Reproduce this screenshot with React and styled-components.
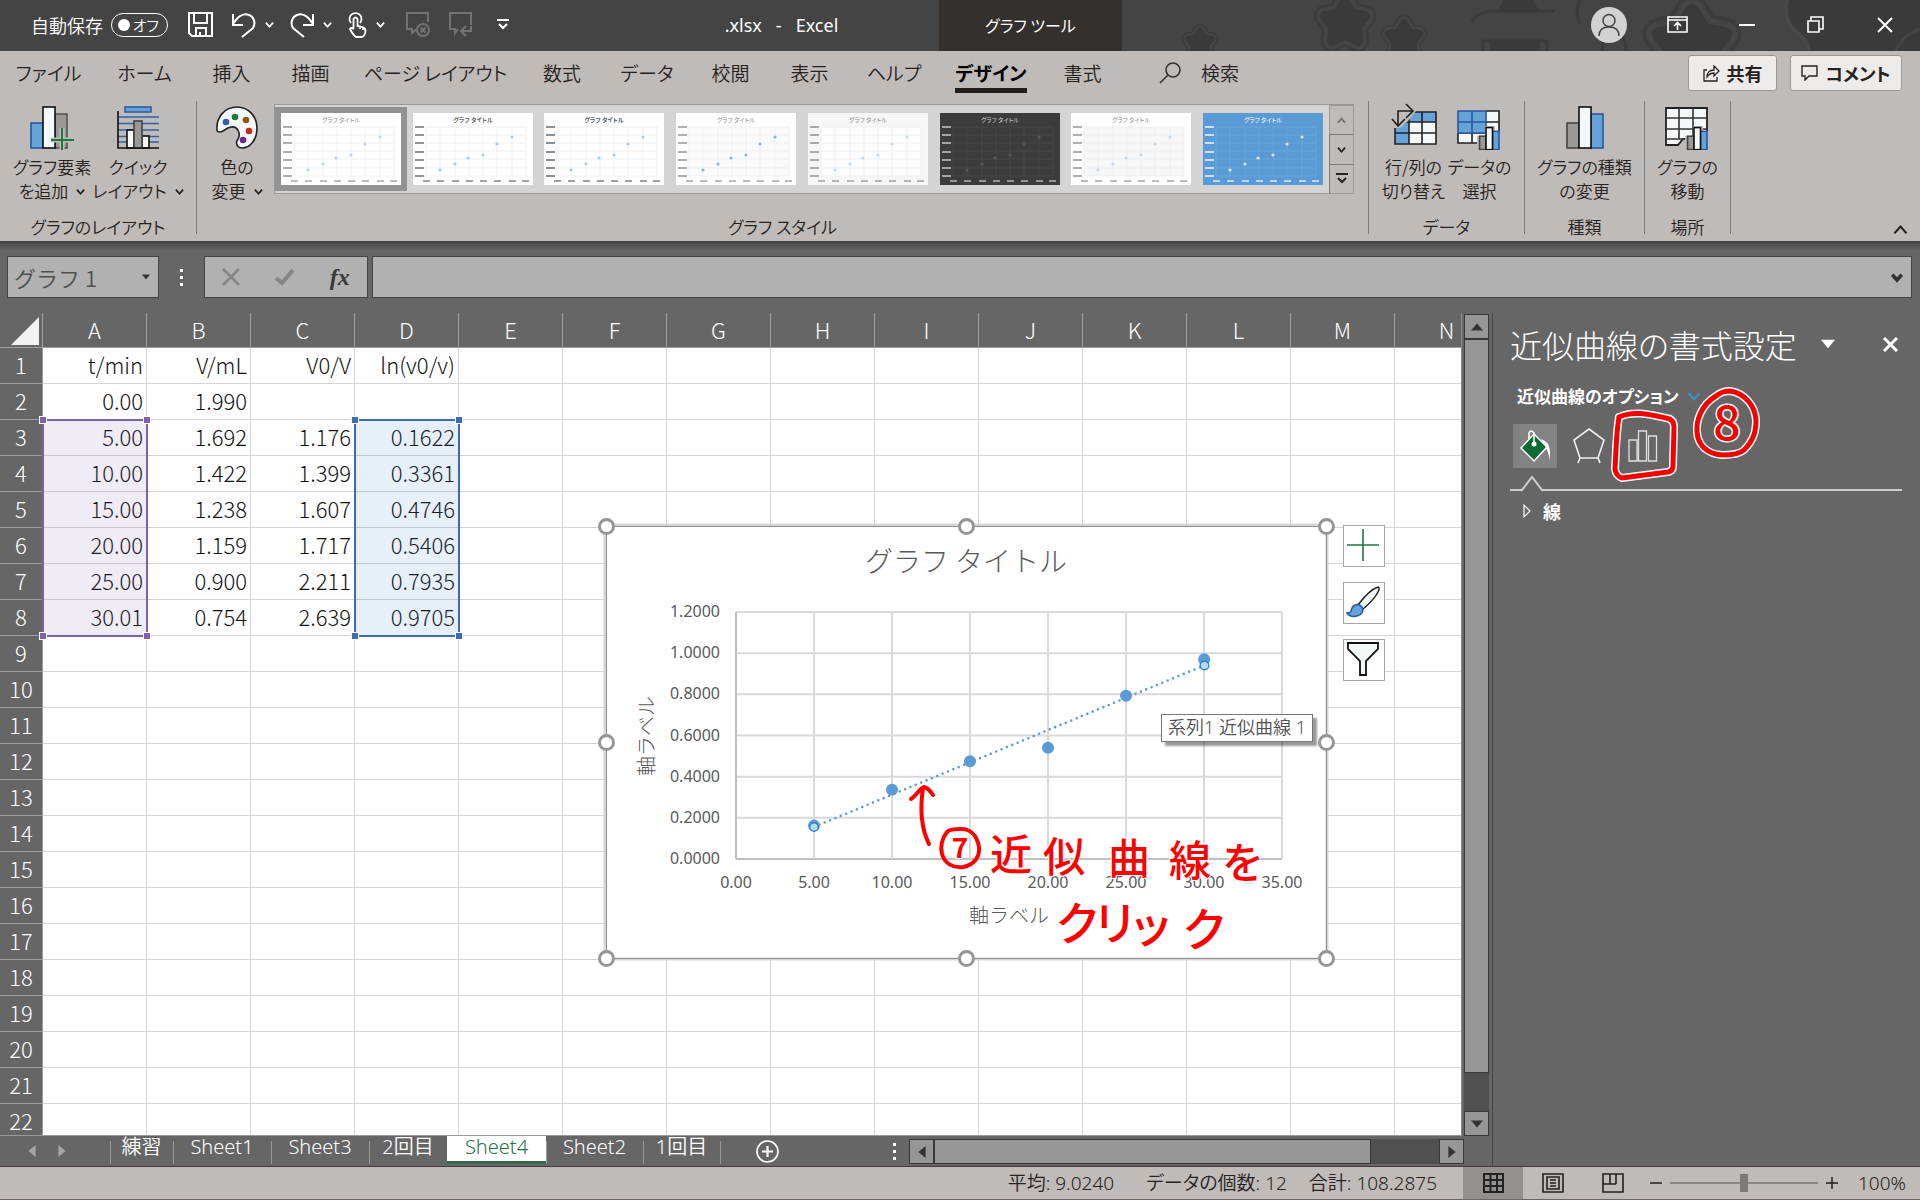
import React, {useState} from 'react'
import styled, {createGlobalStyle, css} from 'styled-components'

const GlobalStyle = createGlobalStyle`
    * {
        box-sizing: border-box;
    }
    body {
        margin: 0;
        background: #666666;
        font-family: "Noto Sans CJK JP", "Noto Sans", sans-serif;
        font-size: 18px;
        font-weight: 350;
        line-height: 24px;
        color: #262220;
        overflow: hidden;
    }
    button, input {
        font: inherit;
        color: inherit;
        margin: 0;
        padding: 0;
        border: 0;
        background: none;
    }
    svg {
        display: block;
        flex: none;
    }
`

const Window = styled.div`
    height: 100vh;
    display: flex;
    flex-direction: column;
    font-feature-settings: "palt";
`

/* ---------- title bar ---------- */

const TitleBar = styled.header`
    height: 51px;
    flex: none;
    display: flex;
    background: #444444;
    color: #ffffff;
`

const QuickAccess = styled.div`
    width: 624px;
    padding: 0 0 2px 31px;
    display: flex;
    align-items: center;
`

const AutoSave = styled.label`
    display: flex;
    align-items: center;
    gap: 8px;
    margin-right: 20px;
    white-space: nowrap;
`

const Switch = styled.span`
    width: 57px;
    height: 24px;
    padding: 0 8px 0 6px;
    border: 1px solid #ffffff;
    border-radius: 12px;
    display: flex;
    align-items: center;
    justify-content: space-between;
    font-size: 15px;
    input {
        appearance: none;
        width: 12px;
        height: 12px;
        border-radius: 50%;
        background: #ffffff;
    }
`

const QuickButton = styled.button`
    width: ${p => p.$w || 58}px;
    height: 40px;
    display: flex;
    align-items: center;
    gap: 9px;
    opacity: ${p => p.disabled ? 0.25 : 1};
`

const DocTitle = styled.div`
    width: 315px;
    padding-bottom: 2px;
    display: flex;
    align-items: center;
    justify-content: center;
    white-space: pre;
    font-family: "Noto Sans", sans-serif;
    font-size: 18px;
    font-weight: 400;
`

const ToolTab = styled.div`
    width: 183px;
    padding-bottom: 2px;
    display: flex;
    align-items: center;
    justify-content: center;
    background: #33302e;
    font-size: 16px;
    font-weight: 400;
`

const WindowControls = styled.div`
    flex: 1;
    position: relative;
    display: flex;
    justify-content: flex-end;
    overflow: hidden;
    padding: 0 1px 2px 0;
`

const Pattern = styled.svg`
    position: absolute;
    right: 0;
    top: 0;
`

const WinButton = styled.button`
    position: relative;
    width: 69px;
    display: flex;
    align-items: center;
    justify-content: center;
`

/* ---------- ribbon ---------- */

const RibbonTabs = styled.nav`
    height: 50px;
    flex: none;
    display: flex;
    padding: 4px 18px 10px 0;
    background: #bfbbb8;
    font-size: 19px;
`

const Tab = styled.button`
    width: ${p => p.$w}px;
    height: 40px;
    padding-top: 6px;
    display: flex;
    justify-content: center;
    white-space: nowrap;
    ${p => p.$active && css`
        font-weight: 700;
        color: #000000;
    `}
    span {
        height: 32px;
        border-bottom: ${p => p.$active ? '5px solid #231f1e' : '0'};
    }
`

const SearchBox = styled.button`
    display: flex;
    align-items: center;
    gap: 20px;
    margin-left: 37px;
`

const TabActions = styled.div`
    margin-left: auto;
    display: flex;
    gap: 13px;
`

const ActionButton = styled.button`
    height: 36px;
    width: ${p => p.$w}px;
    display: flex;
    align-items: center;
    justify-content: center;
    gap: 7px;
    border: 1px solid #9b9896;
    border-radius: 3px;
    background: #edebe9;
    font-size: 18px;
    font-weight: 700;
`

const Ribbon = styled.section`
    height: 140px;
    flex: none;
    display: flex;
    background: #bfbbb8;
`

const Group = styled.div`
    width: ${p => p.$w ? p.$w + 'px' : 'auto'};
    flex: ${p => p.$w ? 'none' : '1'};
    min-width: 0;
    height: 133px;
    display: flex;
    flex-direction: column;
    align-items: center;
    justify-content: space-between;
    border-right: 1px solid #7d7a78;
`

const GroupItems = styled.div`
    width: 100%;
    display: flex;
    justify-content: ${p => p.$start ? 'flex-start' : 'center'};
    padding-left: ${p => p.$start ? 8 : 0}px;
`

const GroupName = styled.div`
    height: 19px;
    font-size: 17px;
`

const BigButton = styled.button`
    width: ${p => p.$w}px;
    padding-top: 5px;
    flex: none;
    display: flex;
    flex-direction: column;
    align-items: center;
    gap: 5px;
    font-size: 17px;
    line-height: 24px;
    white-space: nowrap;
    span {
        display: flex;
        align-items: center;
        justify-content: center;
        gap: 8px;
    }
`

const Gallery = styled.div`
    flex: 1;
    min-width: 0;
    height: 90px;
    margin: 3px 14px 0 5px;
    display: flex;
    border: 1px solid #999999;
    background: #d4d4d4;
    overflow: hidden;
`

const Thumb = styled.button`
    width: 132px;
    height: 84px;
    margin-top: 2px;
    display: flex;
    align-items: center;
    justify-content: center;
    background: ${p => p.$selected ? '#929292' : 'none'};
`

const GalleryArrows = styled.div`
    width: 24px;
    flex: none;
    margin-left: auto;
    display: flex;
    flex-direction: column;
    background: #bfbbb8;
`

const GalleryArrow = styled.button`
    flex: 1;
    display: flex;
    align-items: center;
    justify-content: center;
    border-left: 1px solid #7d7a78;
    border-top: 1px solid #7d7a78;
    opacity: ${p => p.disabled ? 0.5 : 1};
`

const RibbonEnd = styled.div`
    width: 189px;
    display: flex;
    align-items: flex-end;
    justify-content: flex-end;
    padding: 0 12px 4px 0;
`

/* ---------- formula bar ---------- */

const FormulaBar = styled.div`
    height: 72px;
    flex: none;
    display: flex;
    padding: 15px 8px 15px 7px;
    background: linear-gradient(#3f4040, #666666 9px);
`

const FieldBox = styled.div`
    width: ${p => p.$w ? p.$w + 'px' : 'auto'};
    flex: ${p => p.$w ? 'none' : '1'};
    display: flex;
    align-items: center;
    justify-content: space-around;
    border: 1px solid #444444;
    background: #b1b1b1;
    color: #505050;
    & + & {
        margin-left: 4px;
    }
    input {
        flex: 1;
        min-width: 0;
        padding-left: 6px;
        font-size: 22px;
        line-height: 30px;
        font-feature-settings: normal;
    }
    button {
        padding: 0 8px;
    }
`

const FxButton = styled.button`
    font-family: "Liberation Serif", serif;
    font-size: 24px;
    font-style: italic;
    font-weight: 700;
    color: #3a3a3a;
`

const Dots = styled.div`
    width: ${p => p.$w || 45}px;
    display: flex;
    flex-direction: column;
    align-items: center;
    justify-content: center;
    gap: 4px;
    &::before, &::after, i {
        content: "";
        width: 3px;
        height: 3px;
        background: #ffffff;
    }
`

/* ---------- sheet ---------- */

const Main = styled.main`
    flex: 1;
    min-height: 0;
    display: flex;
`

const Workbook = styled.div`
    flex: 1;
    min-width: 0;
    display: flex;
    flex-direction: column;
    border-right: 1px solid #444444;
`

const SheetRow = styled.div`
    flex: 1;
    min-height: 0;
    display: flex;
`

const SheetPane = styled.div`
    flex: 1;
    position: relative;
    min-width: 0;
    overflow: hidden;
    border-right: 1px solid #8c8c8c;
    border-bottom: 1px solid #999999;
`

const Table = styled.table`
    width: 1499px;
    table-layout: fixed;
    border-collapse: separate;
    border-spacing: 0;
    font-size: 22px;
    line-height: 32px;
    color: #111111;
    th {
        height: 36px;
        padding: 0 0 3px;
        font-size: 22px;
        font-weight: 300;
        color: #ffffff;
        background: #666666;
        border-right: 1px solid #9d9d9d;
        border-bottom: 1px solid #9d9d9d;
    }
    thead th {
        height: 35px;
        padding-bottom: 2px;
    }
    td {
        height: 36px;
        padding: 0 3px 3px 0;
        text-align: right;
        font-weight: 300;
        background: #ffffff;
        border-right: 1px solid #d4d4d4;
        border-bottom: 1px solid #d4d4d4;
    }
    svg {
        margin: 4px 0 0 10px;
    }
`

/* coloured frame over the cells that feed a chart series */
const RangeFrame = styled.div`
    position: absolute;
    left: ${p => p.$left}px;
    top: 106px;
    width: 106px;
    height: 218px;
    border: 2px solid ${p => p.$color};
    background: ${p => p.$fill};
    span {
        position: absolute;
        width: 6px;
        height: 6px;
        background: ${p => p.$color};
        outline: 1px solid #ffffff;
    }
    span:nth-child(1) { left: -4px; top: -4px; }
    span:nth-child(2) { right: -4px; top: -4px; }
    span:nth-child(3) { left: -4px; bottom: -4px; }
    span:nth-child(4) { right: -4px; bottom: -4px; }
`

const ChartObject = styled.div`
    position: absolute;
    left: 606px;
    top: 213px;
    font-feature-settings: normal;
    svg {
        overflow: visible;
    }
`

const ChartButtons = styled.div`
    position: absolute;
    left: 1343px;
    top: 212px;
    display: flex;
    flex-direction: column;
    gap: 15px;
    button {
        width: 42px;
        height: 42px;
        padding: 0 2px 2px 0;
        display: flex;
        align-items: center;
        justify-content: center;
        border: 1px solid #a6a6a6;
        background: #ffffff;
    }
`

const Tooltip = styled.div`
    position: absolute;
    left: 1161px;
    top: 401px;
    height: 28px;
    padding: 0 6px;
    border: 1px solid #767676;
    background: #ffffff;
    box-shadow: 4px 4px 2px rgba(0, 0, 0, 0.4);
    color: #505050;
    font-family: "Noto Sans", "Noto Sans CJK JP", sans-serif;
    line-height: 25px;
    font-size: 18px;
    font-feature-settings: normal;
    white-space: nowrap;
`

const ScrollBar = styled.div`
    display: flex;
    flex-direction: ${p => p.$vertical ? 'column' : 'row'};
    background: #505050;
    ${p => p.$vertical ? css`
        width: 25px;
        margin: 1px 3px 0 2px;
    ` : css`
        flex: 1;
        height: 25px;
    `}
    button {
        width: 25px;
        height: 25px;
        display: flex;
        align-items: center;
        justify-content: center;
        border: 1px solid #383838;
        background: #969696;
    }
`

const Thumbbar = styled.div`
    flex: ${p => p.$size};
    border: 1px solid #383838;
    background: #969696;
`

const Track = styled.div`
    flex: ${p => p.$size};
`

const SheetBar = styled.div`
    height: 30px;
    flex: none;
    display: flex;
    align-items: flex-start;
    padding-right: 28px;
    color: #ffffff;
`

const SheetNav = styled.div`
    width: 110px;
    height: 30px;
    padding-left: 26px;
    display: flex;
    align-items: center;
    gap: 18px;
`

const SheetTab = styled.button`
    width: ${p => p.$w}px;
    height: 28px;
    padding-bottom: 3px;
    font-family: "Noto Sans", "Noto Sans CJK JP", sans-serif;
    font-size: 20px;
    line-height: 20px;
    color: ${p => p.$active ? '#217346' : '#ffffff'};
    background: ${p => p.$active ? '#ffffff' : 'linear-gradient(#9a9a9a, #9a9a9a) left 5px / 1px 23px no-repeat'};
    border-bottom: 3px solid ${p => p.$active ? '#336b4d' : 'transparent'};
`

const AddSheet = styled.button`
    width: 160px;
    height: 28px;
    padding: 3px 0 0 36px;
    background: linear-gradient(#9a9a9a, #9a9a9a) left 5px / 1px 23px no-repeat;
`

const ScrollWrap = styled.div`
    flex: 1;
    display: flex;
    align-items: center;
    padding-top: 3px;
`

/* ---------- format pane ---------- */

const Pane = styled.aside`
    width: 427px;
    flex: none;
    position: relative;
    padding: 10px 18px 0 17px;
    color: #ffffff;
`

const PaneHead = styled.div`
    display: flex;
    align-items: center;
    height: 42px;
    h2 {
        flex: 1;
        min-width: 0;
        margin: 0;
        font-size: 32px;
        line-height: 42px;
        font-weight: 300;
        white-space: nowrap;
    }
    button {
        width: 24px;
        flex: none;
        margin-left: 38px;
        display: flex;
        justify-content: center;
    }
`

const PaneOptions = styled.button`
    height: 32px;
    margin: 15px 0 12px 7px;
    display: flex;
    align-items: center;
    gap: 8px;
    font-size: 17px;
    font-weight: 700;
`

const PaneTabs = styled.div`
    display: flex;
    gap: 10px;
    padding-left: 3px;
    button {
        width: 44px;
        height: 44px;
        display: flex;
        align-items: center;
        justify-content: center;
    }
    button:first-child {
        background: #838383;
    }
`

const PaneRule = styled.svg`
    width: 100%;
    height: 16px;
    margin-top: 8px;
`

const PaneSection = styled.button`
    display: flex;
    align-items: center;
    gap: 12px;
    margin: 7px 0 0 13px;
    font-size: 18px;
    font-weight: 700;
`

const PaneMarks = styled.svg`
    position: absolute;
    left: 107px;
    top: 68px;
`

/* ---------- status bar ---------- */

const StatusBar = styled.footer`
    height: 34px;
    flex: none;
    display: flex;
    align-items: center;
    justify-content: flex-end;
    border-top: 1px solid #443a3c;
    border-bottom: 1px solid #6b6664;
    background: #bfbbb8;
    font-family: "Noto Sans", "Noto Sans CJK JP", sans-serif;
`

const Stat = styled.span`
    white-space: pre;
    font-size: 19px;
    margin-right: ${p => p.$gap}px;
`

const ViewButton = styled.button`
    width: 60px;
    height: 32px;
    display: flex;
    align-items: center;
    justify-content: center;
    background: ${p => p.$active ? '#92918f' : 'none'};
`

const Zoom = styled.div`
    width: 277px;
    padding-left: 7px;
    display: flex;
    align-items: center;
    gap: 8px;
    input {
        appearance: none;
        width: 148px;
        height: 18px;
        background: linear-gradient(#8a8785, #8a8785) center / 100% 2px no-repeat;
    }
    input::-webkit-slider-thumb {
        appearance: none;
        width: 8px;
        height: 18px;
        background: #7d7b79;
    }
    output {
        margin-left: 12px;
        font-size: 19px;
    }
`

/* ---------- icons ---------- */

const Chevron = ({size = 9, stroke = 'currentColor', up, w = 2}) => (
    <svg width={size} height={size} viewBox="0 0 10 10" fill="none" stroke={stroke} strokeWidth={w}>
        <path d={up ? 'M1 7.5 5 3l4 4.5' : 'M1 3l4 4.5L9 3'} />
    </svg>
)

const Triangle = ({dir, size = 10, fill = '#333333'}) => {
    const d = {
        up: 'M0 8 5 2l5 6z',
        down: 'M0 2h10L5 8z',
        left: 'M8 0v10L2 5z',
        right: 'M2 0v10l6-5z'
    }[dir]
    return <svg width={size} height={size} viewBox="0 0 10 10"><path fill={fill} d={d} /></svg>
}

const Bars = ({x = 0, y = 0, s = 1, flip}) => (
    <g transform={`translate(${x} ${y}) scale(${s})`} strokeWidth={1.6 / s}>
        {flip ? (
            <>
                <rect x="1" y="17" width="12" height="25" fill="#64a3d8" stroke="#2857a0" />
                <rect x="25" y="8" width="12" height="34" fill="#9b9998" stroke="#555555" />
            </>
        ) : (
            <>
                <rect x="1" y="17" width="12" height="25" fill="#9b9998" stroke="#444444" />
                <rect x="25" y="8" width="12" height="34" fill="#64a3d8" stroke="#2857a0" />
            </>
        )}
        <rect x="13" y="1" width="12" height="41" fill="#f5f8f8" stroke="#111111" />
    </g>
)

const AddElementIcon = () => (
    <svg width="44" height="44" viewBox="0 0 44 44">
        <Bars flip />
        <path d="M32 22v22M21 34h23" stroke="#bfbbb8" strokeWidth="5" />
        <path d="M32 22v22M21 34h23" stroke="#1b7a3c" strokeWidth="2" />
    </svg>
)

const LayoutIcon = () => (
    <svg width="44" height="44" viewBox="0 0 44 44">
        <path d="M2 11h41M2 17.500h41M2 24h41M2 30.500h41M2 36h41" stroke="#2f62a8" strokeWidth="1.6" />
        <rect x="9" y="1" width="26" height="5" fill="#64a3d8" stroke="#2857a0" strokeWidth="1.5" />
        <g stroke="#111111" strokeWidth="1.6" fill="#f5f8f8">
            <rect x="11" y="24" width="7" height="18" />
            <rect x="26" y="30" width="7" height="12" />
            <rect x="18" y="15" width="8" height="27" fill="#9b9998" stroke="#444444" />
            <path d="M2 5v37h41" fill="none" />
        </g>
    </svg>
)

const PaletteIcon = () => (
    <svg width="44" height="44" viewBox="0 0 44 44">
        <path d="M2 24C1 11 10 1 22 1c12 0 20 10 20 21 0 12-7 20-15 20-5 0-7-5-4-9 3-5 0-13-7-12-6 1-7 5-11 5-2 0-3-1-3-2z" fill="#f5f8f8" stroke="#222222" strokeWidth="1.6" />
        <circle cx="11" cy="16" r="3.300" fill="#2f62b4" />
        <circle cx="20" cy="11" r="3.300" fill="#1b7a3c" />
        <circle cx="31" cy="14" r="3.300" fill="#8a5a0c" />
        <circle cx="34" cy="25" r="3.300" fill="#c8281c" />
        <circle cx="28" cy="34" r="3.300" fill="#7a2390" />
    </svg>
)

const SwitchIcon = () => (
    <svg width="48" height="44" viewBox="0 0 48 44" strokeWidth="1.600" overflow="visible">
        <rect x="5" y="6" width="41" height="32" fill="#f5f8f8" />
        <path d="M5 6h41v10H19v22H5z" fill="#64a3d8" />
        <path d="M19 6v32M32 6v32M5 16h41M5 27h41M5 6h41v32H5z" stroke="#222222" fill="none" />
        <path d="M0 0h20l6 5-8 10L10 22H0z" fill="#bfbbb8" />
        <path d="M8 20V5h14M16-2l7 7-7 7M2 13l6 7 7-7" stroke="#222222" fill="none" />
    </svg>
)

const SelectDataIcon = () => (
    <svg width="46" height="44" viewBox="0 0 46 44">
        <g strokeWidth="1.600">
            <rect x="1" y="5" width="41" height="32" fill="#f5f8f8" />
            <path d="M29 5h13v32H1V27h41M29 16h13M15 27v10M29 27v10" stroke="#222222" fill="none" />
            <path d="M1 5h28v22H1zM15 5v22M1 16h28" fill="#64a3d8" stroke="#2857a0" />
        </g>
        <path d="M20 30h8V20h10v5h8v19H20z" fill="#bfbbb8" />
        <Bars x={22} y={21} s={0.54} />
    </svg>
)

const MoveChartIcon = () => (
    <svg width="46" height="44" viewBox="0 0 46 44">
        <path d="M1 2h41v31H18l-5 6H1z" fill="#f5f8f8" stroke="#222222" strokeWidth="1.800" />
        <path d="M14 2v31M28 2v31M1 12h41M1 23h41M1 33h20" stroke="#333333" strokeWidth="1.600" />
        <path d="M20 30h8V20h10v5h8v19H20z" fill="#bfbbb8" />
        <Bars x={22} y={21} s={0.54} />
    </svg>
)

/* x, y, scale of the stars behind the window buttons */
const stars = [[20, 42, 0.7], [165, 22, 1.2], [224, 38, 0.9], [512, 44, 1.9]]

const starPath = 'M0-17 6-7 17-5 10 4 11 16 0 11-11 16-10 4-17-5-6-7z'

const TitlePattern = () => (
    <Pattern width="740" height="51" viewBox="0 0 740 51" strokeLinejoin="round">
        {stars.map(([x, y, s]) => (
            <g key={x} transform={`translate(${x} ${y}) scale(${s})`}>
                <path d={starPath} fill="#3c3c3c" stroke="#3c3c3c" strokeWidth="18" />
                <path d={starPath} fill="#454545" stroke="#454545" strokeWidth="14" />
                <path d={starPath} fill="#3a3a3a" stroke="#3a3a3a" strokeWidth="8" />
            </g>
        ))}
        <path fill="#3a3a3a" d="M324 0h30l4 10h-40zM310 42h50v10h-50z" />
        <path fill="none" stroke="#3a3a3a" strokeWidth="3" d="M292 22q4-10 22-11h60M303 51V41h64v10M400 0q-6 10 0 24M422 51q0-16 12-22 12 6 12 22" />
        <path fill="#3a3a3a" stroke="#484848" strokeWidth="4" d="M608-4q-6 22 6 34 14 8 16 24h120V-4z" />
        <path fill="none" stroke="#444444" strokeWidth="3" d="M716 51q6-16 24-22" />
    </Pattern>
)

/* ---------- data ---------- */

const tabs = [
    ['ファイル', 97], ['ホーム', 95], ['挿入', 79], ['描画', 79], ['ページ レイアウト', 171],
    ['数式', 82], ['データ', 88], ['校閲', 79], ['表示', 79], ['ヘルプ', 90], ['デザイン', 104], ['書式', 79]
]

const columns = 'ABCDEFGHIJKLMN'.split('')

const cells = [
    ['t/min', 'V/mL', 'V0/V', 'ln(v0/v)'],
    ['0.00', '1.990'],
    ['5.00', '1.692', '1.176', '0.1622'],
    ['10.00', '1.422', '1.399', '0.3361'],
    ['15.00', '1.238', '1.607', '0.4746'],
    ['20.00', '1.159', '1.717', '0.5406'],
    ['25.00', '0.900', '2.211', '0.7935'],
    ['30.01', '0.754', '2.639', '0.9705']
]

const points = cells.slice(2).map(row => [Number(row[0]), Number(row[3])])

const thumbs = [
    {bg: '#ffffff', dot: '#bcd5ee', ink: '#8c8c8c'},
    {bg: '#ffffff', dot: '#a9c9e8', ink: '#666666', bold: true},
    {bg: '#ffffff', dot: '#a9c9e8', ink: '#55606e', bold: true},
    {bg: '#ffffff', dot: '#8fb2d6', ink: '#8c8c8c', plot: '#fafafa'},
    {bg: '#f6f6f6', dot: '#c4daee', ink: '#8c8c8c', plot: '#fdfdfd'},
    {bg: '#3c3c3c', dot: '#585858', ink: '#d0d0d0', line: '#474747'},
    {bg: '#ffffff', dot: '#c4daee', ink: '#8c8c8c', plot: '#f7f7f7'},
    {bg: '#5b9bd5', dot: '#d8e8f6', ink: '#ffffff', line: '#68a3d9'}
]

const thumbDots = [[27, 57], [42, 51], [55, 45], [70, 42], [84, 31], [99, 24]]

const sheets = [['練習', 63], ['Sheet1', 98], ['Sheet3', 98], ['2回目', 78], ['Sheet4', 99], ['Sheet2', 97], ['1回目', 77]]

/* ---------- parts ---------- */

const StyleThumb = ({bg, dot, ink, plot = 'none', line = '#efefef', bold}) => (
    <svg width="120" height="72" viewBox="0 0 120 72">
        <rect width="120" height="72" fill={bg} />
        <rect x="13" y="14" width="100" height="49" fill={plot} />
        <path stroke={line} fill="none"
            d="M13 14h100M13 22h100M13 30h100M13 38h100M13 46h100M13 55h100M13 63h100M13 14v49M27 14v49M42 14v49M56 14v49M70 14v49M84 14v49M99 14v49M113 14v49" />
        {[14, 22, 30, 39, 47, 55, 63].map(y => <rect key={y} x="2" y={y - 1} width="9" height="2" fill={ink} opacity="0.7" />)}
        {[13, 27, 42, 56, 70, 84, 99, 112].map(x => <rect key={x} x={x - 3} y="67" width="7" height="2" fill={ink} opacity="0.6" />)}
        {thumbDots.map(([x, y]) => <circle key={x} cx={x} cy={y} r="1.600" fill={dot} />)}
        <text x="60" y="9" fill={ink} fontSize="6" fontWeight={bold ? 700 : 400} textAnchor="middle">グラフ タイトル</text>
    </svg>
)

const px = v => 130 + v * 15.6
const py = v => 333 - v * 205.8

const Chart = () => (
    <svg width="721" height="433" viewBox="0 0 721 433">
        <rect x="-1" y="-1" width="722" height="434" fill="#ffffff" stroke="#d6d6d6" strokeWidth="3" />
        <rect x="0.500" y="0.500" width="720" height="432" fill="none" stroke="#8f8f8f" />
        <text x="360" y="46" fontSize="28" fontWeight="300" fill="#595959" textAnchor="middle">グラフ タイトル</text>
        <g fontFamily="Noto Sans" fontSize="16" fontWeight="400" fill="#595959">
            {[0, 0.2, 0.4, 0.6, 0.8, 1, 1.2].map(v => (
                <g key={v}>
                    <path d={`M130 ${py(v)}h546`} stroke={v ? '#d9d9d9' : '#bfbfbf'} strokeWidth="2" />
                    <text x="114" y={py(v) + 5} textAnchor="end">{v.toFixed(4)}</text>
                </g>
            ))}
            {[0, 5, 10, 15, 20, 25, 30, 35].map(v => (
                <g key={v}>
                    <path d={`M${px(v)} 86V333`} stroke={v ? '#d9d9d9' : '#bfbfbf'} strokeWidth="2" />
                    <text x={px(v)} y="362" textAnchor="middle">{v.toFixed(2)}</text>
                </g>
            ))}
        </g>
        <text x="403" y="397" fontSize="20" fontWeight="300" fill="#595959" textAnchor="middle">軸ラベル</text>
        <text transform="translate(48 210) rotate(-90)" fontSize="20" fontWeight="300" fill="#595959" textAnchor="middle">軸ラベル</text>
        {points.map(([x, y]) => <circle key={x} cx={px(x)} cy={py(y)} r="6" fill="#5b9bd5" />)}
        <path d="M208 301 598 139.500" stroke="#5b9bd5" strokeWidth="2.600" strokeLinecap="round" strokeDasharray="0 5.800" />
        <g fill="#b4dcf8" stroke="#2a86cc" strokeWidth="1.400">
            <circle cx="208" cy="301" r="4.300" />
            <circle cx="598.500" cy="139.500" r="4.300" />
        </g>
        <g fill="none" stroke="#ff0000" strokeWidth="4" strokeLinecap="round" strokeLinejoin="round">
            <path d="M323 318C315 302 314 282 317 262M305 273C310 270 314 262 318 261C322 262 325 266 327 269" />
            <path d="M341 306C336 312 334 321 336 328C339 338 347 342 357 341C368 339 374 331 373 321C371 309 364 302 353 303C346 303 343 304 341 306" />
        </g>
        <g fill="#ff0000" stroke="#ffffff" strokeWidth="2" paintOrder="stroke">
            <text x="354" y="332" fontSize="28" fontWeight="700" textAnchor="middle">7</text>
            <text x="384 437 502 563 616" y="344 346 348 350 352" fontSize="42" fontWeight="500">近似曲線を</text>
            <text x="449 486 522 576" y="414 414 416 420" fontSize="46" fontWeight="500">クリック</text>
        </g>
        <g fill="#ffffff" stroke="#969696" strokeWidth="3">
            {[[0, 0], [360, 0], [720, 0], [0, 216], [720, 216], [0, 432], [360, 432], [720, 432]].map(([x, y]) => (
                <circle key={`${x}-${y}`} cx={x + 0.5} cy={y + 0.5} r="7" />
            ))}
        </g>
    </svg>
)

const Sheet = () => (
    <Table>
        <colgroup>
            <col width="43" />
            {columns.map(c => <col key={c} width="104" />)}
        </colgroup>
        <thead>
            <tr>
                <th aria-label="すべて選択"><svg width="30" height="28"><path d="M29 0v28H1z" fill="#f2f2f2" /></svg></th>
                {columns.map(c => <th key={c}>{c}</th>)}
            </tr>
        </thead>
        <tbody>
            {Array.from({length: 22}, (_, r) => (
                <tr key={r}>
                    <th>{r + 1}</th>
                    {columns.map((c, i) => <td key={c}>{cells[r] && cells[r][i]}</td>)}
                </tr>
            ))}
        </tbody>
    </Table>
)

const Range = props => <RangeFrame {...props}><span /><span /><span /><span /></RangeFrame>

const App = () => {
    let [autoSave, updateAutoSave] = useState(false)
    let [zoom, updateZoom] = useState(100)
    let [sheet, updateSheet] = useState('Sheet4')
    return (
        <Window>
            <GlobalStyle />
            <TitleBar>
                <QuickAccess>
                    <AutoSave>
                        自動保存
                        <Switch><input type="checkbox" checked={autoSave} onChange={() => updateAutoSave(!autoSave)} />オフ</Switch>
                    </AutoSave>
                    <QuickButton $w={44} aria-label="保存">
                        <svg width="25" height="25" fill="none" stroke="#ffffff" strokeWidth="2"><path d="M1 1h23v23H4l-3-3zM6 1v10h13V1M8 24v-8h10v8M12 24v-4" /></svg>
                    </QuickButton>
                    <QuickButton aria-label="元に戻す">
                        <svg width="24" height="26" fill="none" stroke="#ffffff" strokeWidth="2"><path d="M1 2v11h10M1 12C6 4 12 1 17 3s7 8 4 13L10 25" /></svg>
                        <Chevron />
                    </QuickButton>
                    <QuickButton aria-label="やり直し">
                        <svg width="24" height="26" fill="none" stroke="#ffffff" strokeWidth="2"><path d="M23 2v11H13M23 12C18 4 12 1 7 3S0 11 3 16l11 9" /></svg>
                        <Chevron />
                    </QuickButton>
                    <QuickButton aria-label="タッチ/マウス モードの切り替え">
                        <svg width="19" height="26" fill="none" stroke="#ffffff" strokeWidth="1.800">
                            <path d="M3 11a6 6 0 1 1 9 0M5.500 16V7q2-3 4 0v7l5 1q3 1 3 4c0 3-2 6-4 6H8q-3-2-6-8 1-2 4 0M12 14v3M15 15v3" />
                        </svg>
                        <Chevron />
                    </QuickButton>
                    <QuickButton $w={43} disabled aria-label="コメントの削除">
                        <svg width="24" height="25" fill="none" stroke="#ffffff" strokeWidth="2"><path d="M11 17 6 21v-4H1V1h21v9" /><circle cx="17" cy="18" r="6" /><path d="m14.500 15.500 5 5m0-5-5 5" /></svg>
                    </QuickButton>
                    <QuickButton $w={48} disabled aria-label="返信">
                        <svg width="24" height="25" fill="none" stroke="#ffffff" strokeWidth="2"><path d="M9 17l-3 4v-4H1V1h21v12M22 14v5H12m5-5-5 5 5 5" /></svg>
                    </QuickButton>
                    <QuickButton $w={20} aria-label="クイック アクセス ツール バーのカスタマイズ">
                        <svg width="12" height="12" fill="none" stroke="#ffffff" strokeWidth="2"><path d="M0 1h12M2 5l4 4 4-4" /></svg>
                    </QuickButton>
                </QuickAccess>
                <DocTitle>.xlsx   -   Excel</DocTitle>
                <ToolTab>グラフ ツール</ToolTab>
                <WindowControls>
                    <TitlePattern />
                    <WinButton aria-label="アカウント">
                        <svg width="36" height="36" fill="none" stroke="#444444" strokeWidth="1.500">
                            <circle cx="18" cy="18" r="18" fill="#d2d2d2" stroke="none" /><circle cx="18" cy="13.500" r="6" /><path d="M8 29c0-6 4-9 10-9s10 3 10 9" />
                        </svg>
                    </WinButton>
                    <WinButton aria-label="リボンの表示オプション">
                        <svg width="21" height="17" fill="none" stroke="#ffffff" strokeWidth="1.600"><path d="M1 1h19v15H1zM1 4h19M10.500 14V7M7 10l3.500-3.500L14 10" /></svg>
                    </WinButton>
                    <WinButton aria-label="最小化"><svg width="16" height="2"><rect width="16" height="2" fill="#ffffff" /></svg></WinButton>
                    <WinButton aria-label="元のサイズに戻す">
                        <svg width="17" height="17" fill="none" stroke="#ffffff" strokeWidth="1.600"><path d="M1 5h11v11H1zM4 5V1h12v12h-4" /></svg>
                    </WinButton>
                    <WinButton aria-label="閉じる"><svg width="16" height="16" stroke="#ffffff" strokeWidth="2"><path d="m1 1 14 14m0-14L1 15" /></svg></WinButton>
                </WindowControls>
            </TitleBar>

            <RibbonTabs>
                {tabs.map(([name, w]) => <Tab key={name} $w={w} $active={name === 'デザイン'}><span>{name}</span></Tab>)}
                <SearchBox>
                    <svg width="22" height="22" fill="none" stroke="#333333" strokeWidth="1.600"><circle cx="14" cy="8" r="7" /><path d="m9 13-8 8" /></svg>
                    検索
                </SearchBox>
                <TabActions>
                    <ActionButton $w={89}>
                        <svg width="17" height="17" fill="none" stroke="#262220" strokeWidth="1.300"><path d="M4 5H1v11h13v-4M4 12c0-5 3-7 7-7V1l5 5-5 5V8c-3 0-5 1-7 4z" /></svg>
                        共有
                    </ActionButton>
                    <ActionButton $w={112}>
                        <svg width="17" height="16" fill="none" stroke="#262220" strokeWidth="1.400"><path d="M1 1h15v10H8l-4 4v-4H1z" /></svg>
                        コメント
                    </ActionButton>
                </TabActions>
            </RibbonTabs>

            <Ribbon>
                <Group $w={197}>
                    <GroupItems $start>
                        <BigButton $w={88}><AddElementIcon /><div>グラフ要素<span>を追加<Chevron /></span></div></BigButton>
                        <BigButton $w={84}><LayoutIcon /><div>クイック<span>レイアウト<Chevron /></span></div></BigButton>
                    </GroupItems>
                    <GroupName>グラフのレイアウト</GroupName>
                </Group>
                <Group>
                    <GroupItems $start>
                        <BigButton $w={64}><PaletteIcon /><div>色の<span>変更<Chevron /></span></div></BigButton>
                        <Gallery>
                            {thumbs.map((t, i) => <Thumb key={i} $selected={i === 0} aria-label={`スタイル ${i + 1}`}><StyleThumb {...t} /></Thumb>)}
                            <GalleryArrows>
                                <GalleryArrow disabled aria-label="前の行"><Chevron up /></GalleryArrow>
                                <GalleryArrow aria-label="次の行"><Chevron /></GalleryArrow>
                                <GalleryArrow aria-label="その他">
                                    <svg width="12" height="12" fill="none" stroke="#262220" strokeWidth="2"><path d="M0 1h12M2 5l4 4 4-4" /></svg>
                                </GalleryArrow>
                            </GalleryArrows>
                        </Gallery>
                    </GroupItems>
                    <GroupName>グラフ スタイル</GroupName>
                </Group>
                <Group $w={156}>
                    <GroupItems>
                        <BigButton $w={66}><SwitchIcon /><div>行/列の<br />切り替え</div></BigButton>
                        <BigButton $w={66}><SelectDataIcon /><div>データの<br />選択</div></BigButton>
                    </GroupItems>
                    <GroupName>データ</GroupName>
                </Group>
                <Group $w={120}>
                    <GroupItems>
                        <BigButton $w={100}><svg width="38" height="44"><Bars /></svg><div>グラフの種類<br />の変更</div></BigButton>
                    </GroupItems>
                    <GroupName>種類</GroupName>
                </Group>
                <Group $w={86}>
                    <GroupItems>
                        <BigButton $w={70}><MoveChartIcon /><div>グラフの<br />移動</div></BigButton>
                    </GroupItems>
                    <GroupName>場所</GroupName>
                </Group>
                <RibbonEnd>
                    <button aria-label="リボンを折りたたむ"><Chevron size={15} up w={1.3} /></button>
                </RibbonEnd>
            </Ribbon>

            <FormulaBar>
                <FieldBox $w={152}>
                    <input aria-label="名前ボックス" defaultValue="グラフ 1" />
                    <button aria-label="名前の一覧"><Triangle dir="down" size={8} /></button>
                </FieldBox>
                <Dots><i /></Dots>
                <FieldBox $w={164}>
                    <button aria-label="キャンセル"><svg width="18" height="18" stroke="#858585" strokeWidth="2.500"><path d="m1 1 16 16M17 1 1 17" /></svg></button>
                    <button aria-label="入力"><svg width="20" height="18" fill="none" stroke="#858585" strokeWidth="4"><path d="m1 10 6 5L18 2" /></svg></button>
                    <FxButton aria-label="関数の挿入">fx</FxButton>
                </FieldBox>
                <FieldBox>
                    <input aria-label="数式バー" />
                    <button aria-label="数式バーの展開"><Chevron size={12} stroke="#333333" w={3} /></button>
                </FieldBox>
            </FormulaBar>

            <Main>
                <Workbook>
                    <SheetRow>
                        <SheetPane>
                            <Sheet />
                            <Range $left={42} $color="#7f5fb0" $fill="rgba(127, 95, 176, 0.12)" />
                            <Range $left={354} $color="#3a6bb8" $fill="rgba(68, 130, 205, 0.13)" />
                            <ChartObject><Chart /></ChartObject>
                            <ChartButtons>
                                <button aria-label="グラフ要素"><svg width="32" height="32" stroke="#1b7a3c" strokeWidth="1.600"><path d="M16 0v32M0 16h32" /></svg></button>
                                <button aria-label="グラフ スタイル">
                                    <svg width="34" height="32" strokeWidth="1.500">
                                        <path d="M12 19C18 11 26 3 32 1c2 1 1 3 0 5-3 6-9 12-15 17z" fill="#f5f8f8" stroke="#222222" />
                                        <path d="M1 27c4 0 4-2 5-5 2-4 7-5 10-1 2 4 0 8-5 9-4 1-8 0-10-3z" fill="#64a3d8" stroke="#2857a0" />
                                    </svg>
                                </button>
                                <button aria-label="グラフ フィルター">
                                    <svg width="32" height="34" fill="#f5f8f8" stroke="#111111" strokeWidth="1.800"><path d="M1 1h30v6L19 19v14h-6V19L1 7z" /></svg>
                                </button>
                            </ChartButtons>
                            <Tooltip>系列1 近似曲線 1</Tooltip>
                        </SheetPane>
                        <ScrollBar $vertical>
                            <button aria-label="上へ"><Triangle dir="up" size={12} /></button>
                            <Thumbbar $size={736} />
                            <Track $size={38} />
                            <button aria-label="下へ"><Triangle dir="down" size={12} /></button>
                        </ScrollBar>
                    </SheetRow>
                    <SheetBar>
                        <SheetNav><Triangle dir="left" fill="#a5a5a5" size={12} /><Triangle dir="right" fill="#a5a5a5" size={12} /></SheetNav>
                        {sheets.map(([name, w]) => (
                            <SheetTab key={name} $w={w} $active={name === sheet} onClick={() => updateSheet(name)}>{name}</SheetTab>
                        ))}
                        <AddSheet aria-label="新しいシート">
                            <svg width="23" height="23" fill="none" stroke="#ffffff" strokeWidth="1.600"><circle cx="11.500" cy="11.500" r="10.500" /><path d="M11.500 6v11M6 11.500h11" strokeWidth="2.200" /></svg>
                        </AddSheet>
                        <ScrollWrap>
                            <Dots $w={29}><i /></Dots>
                            <ScrollBar>
                                <button aria-label="左へ"><Triangle dir="left" size={12} /></button>
                                <Thumbbar $size={436} />
                                <Track $size={68} />
                                <button aria-label="右へ"><Triangle dir="right" size={12} /></button>
                            </ScrollBar>
                        </ScrollWrap>
                    </SheetBar>
                </Workbook>

                <Pane>
                    <PaneHead>
                        <h2>近似曲線の書式設定</h2>
                        <button aria-label="作業ウィンドウのオプション"><Triangle dir="down" size={14} fill="#ffffff" /></button>
                        <button aria-label="閉じる"><svg width="15" height="15" stroke="#ffffff" strokeWidth="3"><path d="m1 1 13 13m0-13L1 14" /></svg></button>
                    </PaneHead>
                    <PaneOptions>近似曲線のオプション<Chevron size={14} stroke="#3f8fd0" w={1.4} /></PaneOptions>
                    <PaneTabs>
                        <button aria-label="塗りつぶしと線">
                            <svg width="34" height="34">
                                <path d="M3 19 16 5l13 13-13 14z" fill="#0f6b36" stroke="#ffffff" strokeWidth="1.500" />
                                <path d="M11 11V4q2-4 5 0v10" fill="none" stroke="#ffffff" strokeWidth="1.500" />
                                <circle cx="16" cy="15" r="2.500" fill="#ffffff" />
                                <path d="M23 10q9 3 9 13v9q-1-10-9-22z" fill="#ffffff" />
                            </svg>
                        </button>
                        <button aria-label="効果">
                            <svg width="32" height="36" fill="none" stroke="#f0f0f0" strokeWidth="1.600"><path d="M16 1 31 12l-6 18H7L1 12zM7 30l-2 5M25 30l2 5" /></svg>
                        </button>
                        <button aria-label="近似曲線のオプション">
                            <svg width="30" height="32" fill="none" stroke="#e0e0e0" strokeWidth="1.300"><path d="M1 10h8v21H1zM10.500 1h8v30h-8zM20.500 6h8v25h-8z" /></svg>
                        </button>
                    </PaneTabs>
                    <PaneRule>
                        <path d="M0 14h12l10-13 10 13h2000" fill="none" stroke="#cfcfcf" strokeWidth="2" />
                    </PaneRule>
                    <PaneSection>
                        <svg width="8" height="14" fill="none" stroke="#ffffff" strokeWidth="1.200"><path d="M1 1v12l6-6z" /></svg>
                        線
                    </PaneSection>
                    <PaneMarks width="170" height="110" viewBox="1600 381 170 110" fill="none" strokeLinecap="round" strokeLinejoin="round">
                        {[['#ffffff', 8], ['#f40000', 5]].map(([color, w]) => (
                            <path key={color} stroke={color} strokeWidth={w}
                                d="M1619 417C1616 434 1616 454 1615 469Q1616 476 1622 478L1668 472Q1673 471 1673 466L1674 427Q1674 419 1666 418C1652 415 1634 410 1619 417M1716 396C1701 405 1696 421 1697 432C1698 446 1708 454 1722 455C1733 455 1740 454 1744 450C1754 440 1756 431 1756 420C1755 405 1744 393 1730 391Q1722 391 1716 396" />
                        ))}
                        <text x="1727" y="440" fontSize="48" fontWeight="500" textAnchor="middle" fill="#f40000" stroke="#ffffff" strokeWidth="3" paintOrder="stroke">8</text>
                    </PaneMarks>
                </Pane>
            </Main>

            <StatusBar>
                <Stat $gap={32}>平均: 9.0240</Stat>
                <Stat $gap={22}>データの個数: 12</Stat>
                <Stat $gap={26}>合計: 108.2875</Stat>
                <ViewButton $active aria-label="標準">
                    <svg width="21" height="20" fill="none" stroke="#222222" strokeWidth="2"><path d="M1 1h19v18H1zM7.500 1v18M14 1v18M1 7h19M1 13h19" /></svg>
                </ViewButton>
                <ViewButton aria-label="ページ レイアウト">
                    <svg width="22" height="20" fill="none" stroke="#222222" strokeWidth="1.600"><path d="M1 1h20v18H1zM5 4h12v12H5zM8 7h6M8 10h6M8 13h6" /></svg>
                </ViewButton>
                <ViewButton aria-label="改ページ プレビュー">
                    <svg width="22" height="20" fill="none" stroke="#222222" strokeWidth="1.600"><path d="M1 1h20v18H1zM8 1v10M14 1v10M1 11h13" /></svg>
                </ViewButton>
                <Zoom>
                    <button aria-label="縮小" onClick={() => updateZoom(zoom - 10)}><svg width="12" height="12" stroke="#222222" strokeWidth="1.500"><path d="M0 6h12" /></svg></button>
                    <input aria-label="ズーム" type="range" min="0" max="200" value={zoom} onChange={e => updateZoom(Number(e.target.value))} />
                    <button aria-label="拡大" onClick={() => updateZoom(zoom + 10)}><svg width="12" height="12" stroke="#222222" strokeWidth="1.500"><path d="M0 6h12M6 0v12" /></svg></button>
                    <output>{zoom}%</output>
                </Zoom>
            </StatusBar>
        </Window>
    )
}

export default App
